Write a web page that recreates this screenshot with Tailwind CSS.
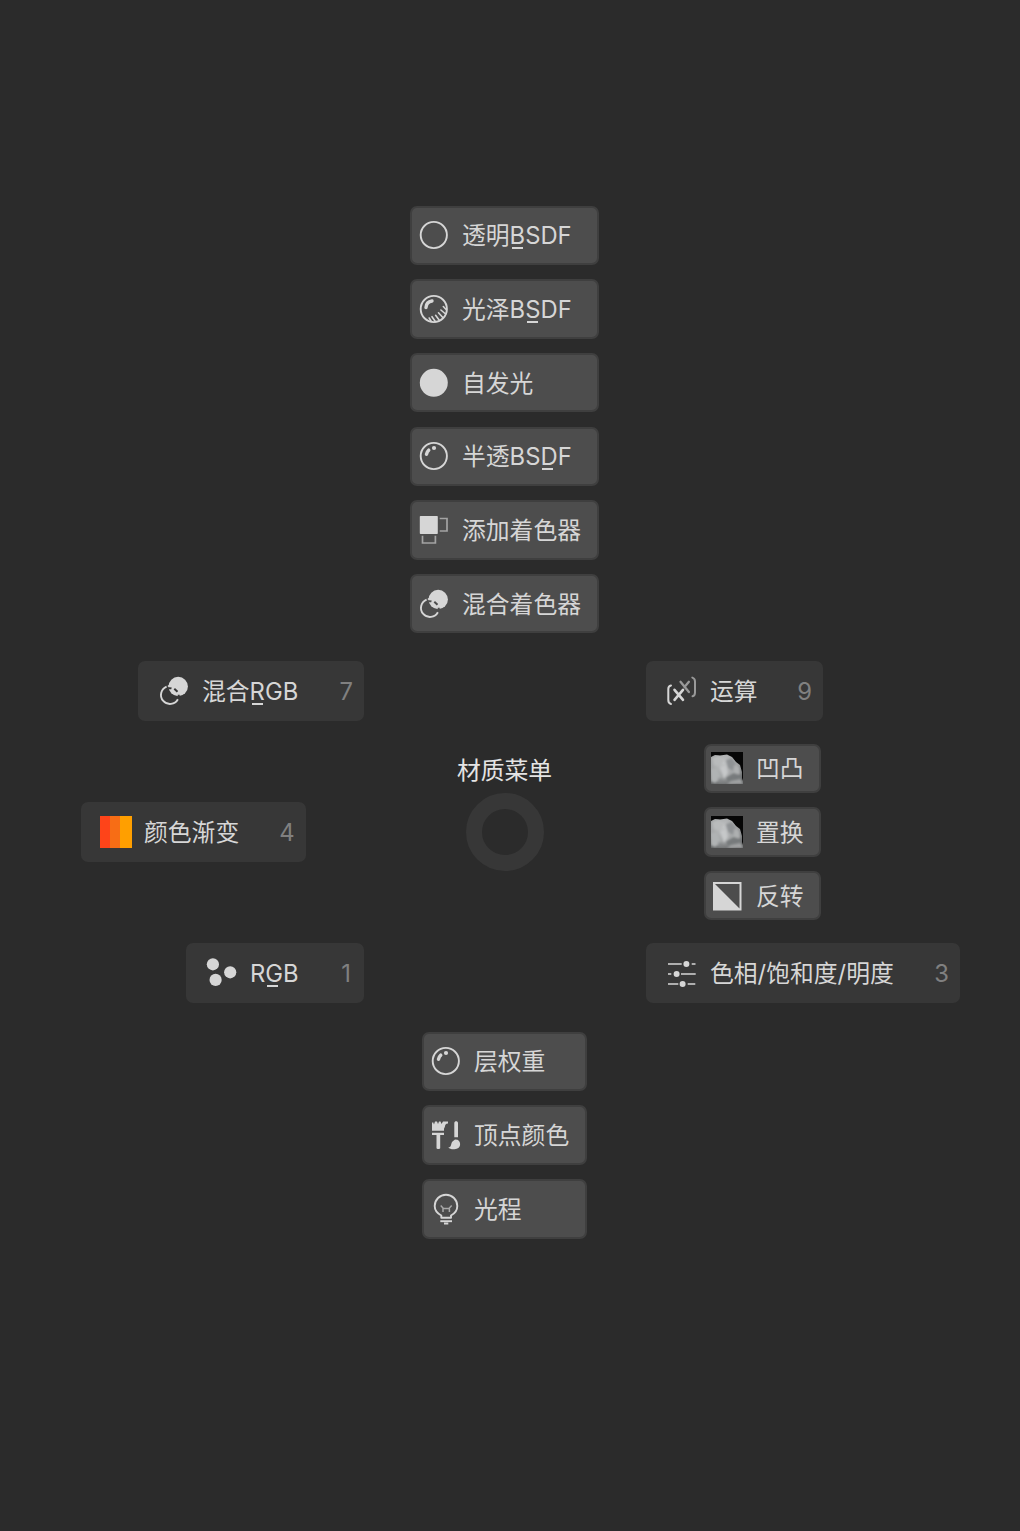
<!DOCTYPE html>
<html lang="zh-CN">
<head>
<meta charset="utf-8">
<title>材质菜单</title>
<script src="https://cdn.jsdelivr.net/npm/@tailwindcss/browser@4"></script>
</head>
<body class="bg-[#2b2b2b]">
<svg class="absolute size-0" aria-hidden="true">
  <defs>
    <radialGradient id="rock" cx="0.4" cy="0.35" r="0.75"><stop offset="0" stop-color="#c2c4c5"/><stop offset="0.55" stop-color="#a3a5a6"/><stop offset="1" stop-color="#606263"/></radialGradient>
    <filter id="soft" x="-20%" y="-20%" width="140%" height="140%"><feGaussianBlur stdDeviation="1.3"/></filter>
    <clipPath id="thumb"><path d="M0 5 4 3 9 3.500 16 2.500 21 5 25 10 29 13 31 20 31 26 32 29V32H0Z"/></clipPath>
  </defs>
  <symbol id="ring" viewBox="0 0 32 32"><circle cx="15.800" cy="16" r="13.100" fill="none" stroke="currentColor" stroke-width="1.900"/></symbol>
  <symbol id="glossy" viewBox="0 0 32 32" fill="none" stroke="currentColor">
    <circle cx="15.800" cy="16" r="13.100" stroke-width="1.900"/>
    <path d="M8 14.500C8.200 11 10.500 8.500 14 8" stroke-width="3.400" stroke-linecap="round"/>
    <path d="M25.300 13.500 28.300 16.800M22.900 17 27.600 21M20.500 19.800 24.800 24.500M17.600 22.300 21.300 27.300M14 23.700 17.300 28.500M11.200 25 13 28" stroke-width="1.600" stroke-linecap="round"/>
  </symbol>
  <symbol id="glass" viewBox="0 0 32 32" fill="none" stroke="currentColor">
    <circle cx="15.800" cy="16" r="13.100" stroke-width="1.900"/>
    <path d="M8.500 14.200C8.800 12.500 9.500 11.300 10.700 10.200" stroke-width="3.500" stroke-linecap="round"/>
    <circle cx="16" cy="8" r="2.100" fill="currentColor" stroke="none"/>
  </symbol>
  <symbol id="disc" viewBox="0 0 32 32"><circle cx="15.800" cy="15.800" r="14" fill="currentColor"/></symbol>
  <symbol id="add" viewBox="0 0 32 32">
    <rect x="1.800" y="2" width="18" height="18" rx=".7" fill="currentColor"/>
    <path d="M21.700 4.500H29V17H21.700M4.500 21.800V29H17.400V21.800" fill="none" stroke="#a3a3a3" stroke-width="1.700"/>
  </symbol>
  <symbol id="bulb" viewBox="0 0 32 32" fill="none" stroke="currentColor">
    <path d="M11.300 24.800V22.500C7.500 20.500 4.700 17 4.700 13A11.300 11.300 0 0 1 27.300 13C27.300 17 24.800 20.500 21 22.500V24.800Z" stroke-width="1.900" stroke-linejoin="round"/>
    <path d="M10.300 28.200H22" stroke-width="1.900"/><path d="M14 30.500H18.300" stroke-width="2"/>
    <path d="M10.700 12.500 13 15V19M21.700 12.500 19.400 15V19M13 15.500H19.400" stroke="#a8a8a8" stroke-width="1.500"/>
  </symbol>
  <symbol id="brushes" viewBox="0 0 32 32" fill="currentColor">
    <path d="M2 4 3 3 4 5.500 5 2.500H7L8 5 9 2.500H10.500L11.500 5 13 2.500H18V4.500C15.500 4.500 15.300 6 14.800 8 14.500 9 14 9 14 10V11.800H2Z"/>
    <path d="M2 13.800H14V15.900H10.200V29C10.200 30.300 6.500 30.300 6.500 29V15.900H2Z"/>
    <path d="M24.300 4C24.300 1.800 28 1.800 28 4V18.300H24.300Z"/>
    <path d="M25 20.500 27.500 20.800C31.500 23 31.300 30 24.500 30.200 21.500 30.300 19.500 30 18.300 28.500 22 28 20.500 24.500 22.500 22.500Z"/>
  </symbol>
  <symbol id="math" viewBox="0 0 32 32" fill="none" stroke-linecap="round" stroke-width="2">
    <path d="M5 10.500C2.700 11 2.300 12 2.300 14V25C2.300 27.500 2.800 28.500 5 29" stroke="currentColor"/>
    <path d="M8.500 14.800 17 24.800M17 14.800 8.500 24.800" stroke="currentColor" stroke-width="2.600"/>
    <path d="M14.500 6.800 22.900 17M22.900 6.800 18.500 12" stroke="#999" stroke-width="2.300"/>
    <path d="M26.300 2.600C28.600 3.200 29 4.300 29 6.500V17.500C29 19.800 28.500 20.800 26.500 21.300" stroke="#999"/>
  </symbol>
  <symbol id="dots" viewBox="0 0 32 32" fill="currentColor"><circle cx="6.900" cy="7.300" r="6.100"/><circle cx="24.200" cy="15.300" r="6.100"/><circle cx="9.600" cy="22.900" r="6.100"/></symbol>
  <symbol id="sliders" viewBox="0 0 32 32" fill="currentColor">
    <path d="M2 7H15.700M25.700 7H29.500M2 17H5.300M15 17H29.700M2 27H12.300M21.700 27H29.300" stroke="currentColor" stroke-width="1.500"/>
    <circle cx="20.400" cy="7" r="3"/><circle cx="10.600" cy="17" r="3"/><circle cx="16.600" cy="27" r="3"/>
  </symbol>
  <symbol id="invert" viewBox="0 0 32 32"><path d="M3 3H29.500V29.500H3Z" fill="none" stroke="currentColor" stroke-width="2"/><path d="M3 3 29.500 29.500H3Z" fill="currentColor"/></symbol>
  <symbol id="ramp" viewBox="0 0 32 32"><path d="M0 0H10.500V32H0Z" fill="#fe4419"/><path d="M10 0H20.500V32H10Z" fill="#f76d15"/><path d="M20 0H32V32H20Z" fill="#ff9f00"/></symbol>
  <symbol id="mix" viewBox="0 0 32 32" fill="none">
    <circle cx="20.200" cy="11.500" r="9.700" fill="currentColor"/>
    <path d="M8.600 11.600A9 9 0 1 0 19.900 24.200" stroke="currentColor" stroke-width="1.900"/>
    <path d="M10.500 13.200A7.500 7.500 0 0 1 13.500 13.400M16.300 13.700 19.500 16.700M20.700 19.800V23" class="stroke-(--cut)" stroke-width="2"/>
    <path d="M9.800 11H13" stroke="currentColor" stroke-width="1.600"/>
  </symbol>
  <symbol id="noise" viewBox="0 0 32 32">
    <path d="M0 0H32V32H0Z" fill="#060606"/>
    <g clip-path="url(#thumb)">
      <path d="M0 0H32V32H0Z" fill="url(#rock)"/>
      <g filter="url(#soft)">
        <path d="M15 8 21 6 25 12 22 19 17 16Z" fill="#8f9294"/><path d="M1 6 8 4 12 8 8 14 3 13Z" fill="#b9bbbc"/>
        <path d="M9 15 15 13 17 21 13 27Z" fill="#c6c8c9"/><path d="M0 17 6 16 10 26 4 31 0 29Z" fill="#b0b3b4"/>
        <path d="M23 13 28 15 29 22 22 23Z" fill="#aeb0b1"/><path d="M15 26 23 21 31 24 28 29 18 31Z" fill="#777a7c"/>
        <path d="M20 29 30 27 32 32H16Z" fill="#a0a2a3"/><path d="M7 25 11 29 8 31Z" fill="#85888a"/>
      </g>
    </g>
  </symbol>
</svg>

<main class="flex h-[1531px] w-[1020px] flex-col overflow-hidden bg-[#2b2b2b] pt-[205.5px] font-['Inter','Noto_Sans_CJK_SC',sans-serif] text-[23.8px] leading-[30px] whitespace-nowrap text-[#d6d6d6] [&_button>span]:pt-[2px]">

  <section class="ml-[410px] flex w-[189px] flex-col gap-[14.2px] [--cut:#4d4d4d]">
    <button class="flex h-[59.500px] items-center gap-3 rounded-[7px] border-2 border-[#3f3f3f] bg-[#4d4d4d] px-1.5"><svg class="size-8 shrink-0"><use href="#ring"/></svg><span>透明<span class="relative after:absolute after:bottom-px after:left-[2px] after:h-[2px] after:w-[11px] after:bg-current">B</span>SDF</span></button>
    <button class="flex h-[59.500px] items-center gap-3 rounded-[7px] border-2 border-[#3f3f3f] bg-[#4d4d4d] px-1.5"><svg class="size-8 shrink-0"><use href="#glossy"/></svg><span>光泽B<span class="relative after:absolute after:bottom-px after:left-[2px] after:h-[2px] after:w-[11px] after:bg-current">S</span>DF</span></button>
    <button class="flex h-[59.500px] items-center gap-3 rounded-[7px] border-2 border-[#3f3f3f] bg-[#4d4d4d] px-1.5"><svg class="size-8 shrink-0"><use href="#disc"/></svg><span>自发光</span></button>
    <button class="flex h-[59.500px] items-center gap-3 rounded-[7px] border-2 border-[#3f3f3f] bg-[#4d4d4d] px-1.5"><svg class="size-8 shrink-0"><use href="#glass"/></svg><span>半透BS<span class="relative after:absolute after:bottom-px after:left-[2px] after:h-[2px] after:w-[11px] after:bg-current">D</span>F</span></button>
    <button class="flex h-[59.500px] items-center gap-3 rounded-[7px] border-2 border-[#3f3f3f] bg-[#4d4d4d] px-1.5"><svg class="size-8 shrink-0"><use href="#add"/></svg><span>添加着色器</span></button>
    <button class="flex h-[59.500px] items-center gap-3 rounded-[7px] border-2 border-[#3f3f3f] bg-[#4d4d4d] px-1.5"><svg class="size-8 shrink-0"><use href="#mix"/></svg><span>混合着色器</span></button>
  </section>

  <section class="mt-[27.500px] grid grid-cols-[364px_282px_374px] [--cut:#373737]">
    <button class="flex h-[60px] w-[226px] items-center gap-3 justify-self-end rounded-[7px] bg-[#373737] pr-[11px] pl-5"><svg class="size-8 shrink-0"><use href="#mix"/></svg><span>混合<span class="relative after:absolute after:bottom-px after:left-[2px] after:h-[2px] after:w-[11px] after:bg-current">R</span>GB</span><span class="ml-auto text-[#808080]">7</span></button>
    <button class="col-start-3 flex h-[60px] w-[177px] items-center gap-3 rounded-[7px] bg-[#373737] pr-[11px] pl-5"><svg class="size-8 shrink-0"><use href="#math"/></svg><span>运算</span><span class="ml-auto text-[#808080]">9</span></button>
  </section>

  <section class="mt-[22.500px] grid h-[177px] grid-cols-[364px_282px_374px] items-center">
    <button class="mr-[58.500px] flex h-[60px] w-[225px] items-center gap-3 justify-self-end rounded-[7px] bg-[#373737] pr-[11px] pl-[19.500px]"><svg class="size-8 shrink-0"><use href="#ramp"/></svg><span>颜色渐变</span><span class="ml-auto text-[#808080]">4</span></button>
    <div class="flex h-full flex-col items-center pt-[13px] pr-px">
      <h1 class="text-[#e4e4e4]">材质菜单</h1>
      <div class="mt-[6.500px] size-[78px] rounded-full border-16 border-[#373737]"></div>
    </div>
    <div class="ml-[58px] flex w-[117px] flex-col gap-[14.200px]">
      <button class="flex h-[49.500px] items-center gap-[13px] rounded-[7px] border-2 border-[#3f3f3f] bg-[#4d4d4d] px-[5px]"><svg class="size-8 shrink-0"><use href="#noise"/></svg><span>凹凸</span></button>
      <button class="flex h-[49.500px] items-center gap-[13px] rounded-[7px] border-2 border-[#3f3f3f] bg-[#4d4d4d] px-[5px]"><svg class="size-8 shrink-0"><use href="#noise"/></svg><span>置换</span></button>
      <button class="flex h-[49.500px] items-center gap-[13px] rounded-[7px] border-2 border-[#3f3f3f] bg-[#4d4d4d] px-[5px]"><svg class="size-8 shrink-0"><use href="#invert"/></svg><span>反转</span></button>
    </div>
  </section>

  <section class="mt-[22.300px] grid grid-cols-[364px_282px_374px]">
    <button class="flex h-[60px] w-[178px] items-center gap-3 justify-self-end rounded-[7px] bg-[#373737] pr-[13px] pl-5"><svg class="size-8 shrink-0"><use href="#dots"/></svg><span>R<span class="relative after:absolute after:bottom-px after:left-[2px] after:h-[2px] after:w-[11px] after:bg-current">G</span>B</span><span class="ml-auto text-[#808080]">1</span></button>
    <button class="col-start-3 flex h-[60px] w-[314px] items-center gap-3 rounded-[7px] bg-[#373737] pr-[11px] pl-5"><svg class="size-8 shrink-0"><use href="#sliders"/></svg><span>色相/饱和度/明度</span><span class="ml-auto text-[#808080]">3</span></button>
  </section>

  <section class="mt-[29px] ml-[422px] flex w-[165px] flex-col gap-[14.200px]">
    <button class="flex h-[59.500px] items-center gap-3 rounded-[7px] border-2 border-[#3f3f3f] bg-[#4d4d4d] px-1.5"><svg class="size-8 shrink-0"><use href="#glass"/></svg><span>层权重</span></button>
    <button class="flex h-[59.500px] items-center gap-3 rounded-[7px] border-2 border-[#3f3f3f] bg-[#4d4d4d] px-1.5"><svg class="size-8 shrink-0"><use href="#brushes"/></svg><span>顶点颜色</span></button>
    <button class="flex h-[59.500px] items-center gap-3 rounded-[7px] border-2 border-[#3f3f3f] bg-[#4d4d4d] px-1.5"><svg class="size-8 shrink-0"><use href="#bulb"/></svg><span>光程</span></button>
  </section>
</main>
</body>
</html>
